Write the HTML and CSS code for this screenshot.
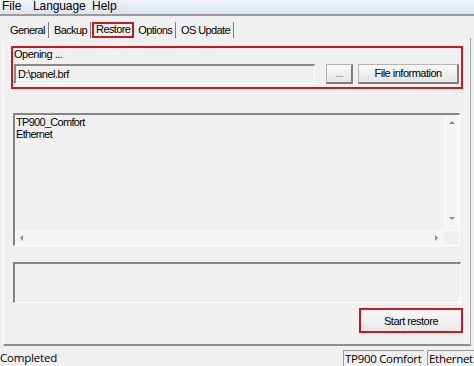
FILE: index.html
```html
<!DOCTYPE html>
<html lang="en">
<head>
  <meta charset="UTF-8" />
  <title>Restore</title>
  <link rel="stylesheet" href="styles.css">
</head>
<body>
  <div class="menubar">
    <span class="menu-file">File</span>
    <span class="menu-lang">Language</span>
    <span class="menu-help">Help</span>
  </div>

  <div class="tabs">
    <div class="tab">General</div>
    <div class="tab">Backup</div>
    <div class="tab active">Restore</div>
    <div class="tab">Options</div>
    <div class="tab">OS Update</div>
  </div>

  <div class="panel">
    <div class="source">
      <div class="label">Opening ...</div>
      <div class="row">
        <div class="field">D:\panel.brf</div>
        <button class="btn dots">...</button>
        <button class="btn info">File information</button>
      </div>
    </div>

    <div class="listbox">
      <div class="list-main">
        <div class="list-text">TP900_Comfort<br>Ethernet</div>
        <div class="vscroll">
          <span class="arrow up"></span>
          <span class="arrow down"></span>
        </div>
      </div>
      <div class="hscroll">
        <div class="htrack">
          <span class="arrow left"></span>
          <span class="arrow right"></span>
        </div>
        <div class="corner"></div>
      </div>
    </div>

    <div class="progress"></div>

    <div class="actions">
      <button class="btn start">Start restore</button>
    </div>
  </div>

  <div class="statusbar">
    <div class="status-text">Completed</div>
    <div class="status-cell device">TP900 Comfort</div>
    <div class="status-cell link">Ethernet</div>
  </div>
</body>
</html>
```

FILE: styles.css
```css
* {
  box-sizing: border-box;
}
body {
  margin: 0;
  width: 474px;
  height: 366px;
  overflow: hidden;
  background: #f0f0f0;
  font-family: "Liberation Sans", Arial, sans-serif;
  font-size: 11px;
  color: #000;
}

/* menu */
.menubar {
  height: 16px;
  background: linear-gradient(#f1f4fa, #dde4f1);
  border-bottom: 2px solid #9a9a9a;
  font-size: 12px;
  line-height: 13px;
  display: flex;
  padding-left: 2px;
}
.menu-file { width: 31px; }
.menu-lang { width: 59px; letter-spacing: -0.1px; }

/* tabs */
.tabs {
  height: 22px;
  display: flex;
  align-items: flex-end;
  padding-left: 8px;
  letter-spacing: -0.6px;
}
.tab {
  height: 16px;
  line-height: 14px;
  padding: 1px 3px 0 2px;
  margin-right: 3px;
  border-right: 1px solid #7a7a7a;
}
.tab.active {
  border: 2px solid #cc1822;
  padding: 0 2px 0 2px;
  line-height: 11px;
  margin-left: -2px;
  margin-right: 2px;
}

/* panel */
.panel {
  margin-left: 3px;
  width: 468px;
  height: 308px;
  border-left: 1px solid #fdfdfd;
  border-right: 1px solid #a5a5a5;
  border-bottom: 2px solid #8e8e8e;
  padding: 8px 7px 0 7px;
}
.source {
  border: 2px solid #cc1822;
  height: 43px;
  padding: 1px 2px 0 1px;
}
.label {
  height: 14px;
  line-height: 11px;
  letter-spacing: -0.5px;
}
.row {
  display: flex;
  align-items: center;
  height: 21px;
}
.field {
  width: 302px;
  height: 20px;
  border-top: 2px solid #8a8a8a;
  border-left: 2px solid #8a8a8a;
  border-right: 1px solid #fff;
  border-bottom: 1px solid #fff;
  padding: 2px 0 0 2px;
  letter-spacing: -0.5px;
}
.btn {
  font-family: inherit;
  font-size: 11px;
  letter-spacing: -0.5px;
  background: linear-gradient(#f7f7f7, #e6e6e6);
  border: 1px solid #b4b4b4;
  border-right: 2px solid #7e7e7e;
  border-bottom: 2px solid #7e7e7e;
  padding: 0;
  height: 20px;
  color: #000;
}
.dots {
  width: 27px;
  margin-left: 11px;
  color: #777;
}
.info {
  width: 101px;
  margin-left: 5px;
}

/* list */
.listbox {
  margin: 24px 0 0 2px;
  width: 447px;
  height: 133px;
  border-top: 2px solid #858585;
  border-left: 2px solid #858585;
  border-right: 1px solid #fff;
  border-bottom: 1px solid #fff;
  display: flex;
  flex-direction: column;
}
.list-main {
  flex: 1;
  display: flex;
}
.list-text {
  flex: 1;
  padding: 1px 0 0 1px;
  line-height: 12px;
  letter-spacing: -0.7px;
}
.vscroll {
  width: 15px;
  background: #f4f4f4;
  border-left: 1px solid #fafafa;
  display: flex;
  flex-direction: column;
  justify-content: space-between;
  align-items: center;
  padding: 6px 0 10px;
}
.hscroll {
  height: 15px;
  display: flex;
  border-top: 1px solid #fafafa;
}
.htrack {
  flex: 1;
  background: #f4f4f4;
  display: flex;
  justify-content: space-between;
  align-items: center;
  padding: 0 6px 0 5px;
}
.corner {
  width: 15px;
  background: #f0f0f0;
}
.arrow {
  width: 0;
  height: 0;
  border: 3px solid transparent;
}
.arrow.up { border-bottom-color: #8a8a8a; border-top-width: 0; }
.arrow.down { border-top-color: #8a8a8a; border-bottom-width: 0; }
.arrow.left { border-right-color: #8a8a8a; border-left-width: 0; }
.arrow.right { border-left-color: #8a8a8a; border-right-width: 0; }

.progress {
  margin: 16px 0 0 2px;
  width: 448px;
  height: 41px;
  border-top: 2px solid #858585;
  border-left: 2px solid #858585;
  border-right: 1px solid #fff;
  border-bottom: 1px solid #fff;
}

.actions {
  display: flex;
  justify-content: flex-end;
  margin-top: 5px;
}
.start {
  width: 104px;
  height: 25px;
  border: 2px solid #cc1822;
  background: linear-gradient(#f8f8f8, #e8e8e8);
}

/* status */
.statusbar {
  display: flex;
  align-items: flex-start;
  padding-top: 4px;
  font-family: "Open Sans", sans-serif;
  font-size: 11.5px;
  line-height: 16px;
}
.status-text {
  flex: 1;
  letter-spacing: -0.2px;
}
.status-cell {
  border-top: 1px solid #9a9a9a;
  border-left: 1px solid #9a9a9a;
  padding-left: 1px;
  height: 18px;
  letter-spacing: -0.3px;
}
.device { width: 81px; margin-right: 3px; }
.link { width: 47px; }
```
